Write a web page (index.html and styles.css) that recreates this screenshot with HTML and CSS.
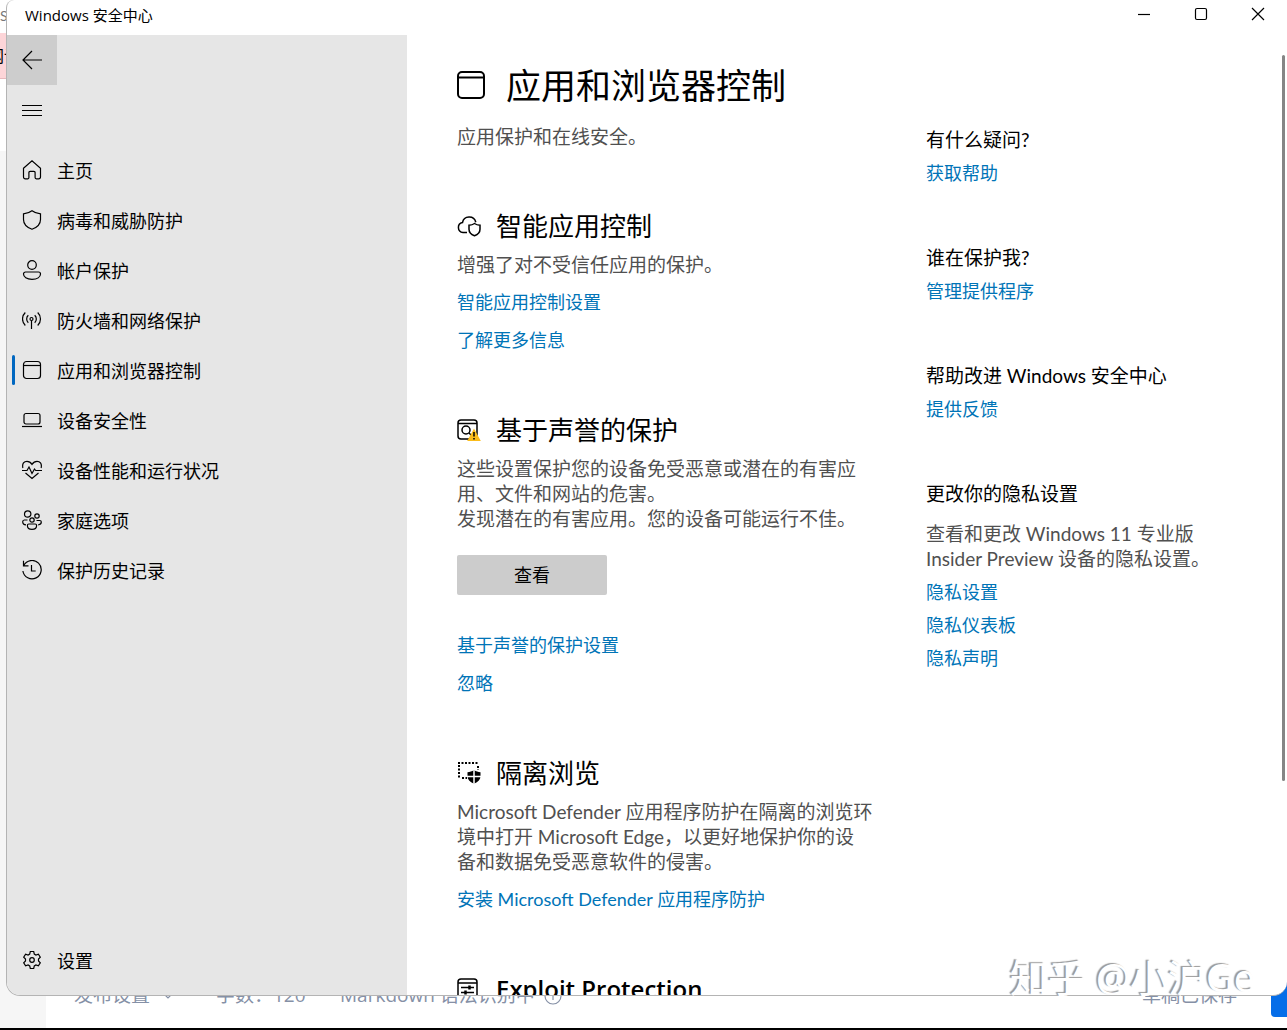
FILE: index.html
```html
<!DOCTYPE html>
<html lang="zh-CN">
<head>
<meta charset="utf-8">
<title>Windows 安全中心</title>
<link rel="stylesheet" href="styles.css">
</head>
<body>
<div class="desktop">

  <div class="editor">
    <div class="editor-edge" aria-hidden="true">
      <div class="edge-top">S</div>
      <div class="edge-alert">网讠</div>
      <div class="edge-card"></div>
    </div>
    <footer class="editor-footer">
      <span class="publish">发布设置 <svg width="10" height="10" viewBox="0 0 10 10"><path d="M1 3l4 4 4-4"/></svg></span>
      <span class="count">字数：120</span>
      <span class="syntax">Markdown 语法识别中 <svg width="18" height="18" viewBox="0 0 18 18"><circle cx="9" cy="9" r="8"/><path d="M9 8v5M9 5v1"/></svg></span>
      <span class="saved">草稿已保存</span>
      <button class="publish-btn" type="button" aria-label="发布"></button>
    </footer>
  </div>

  <div class="window">
    <header class="titlebar">
      <span class="titlebar-text">Windows 安全中心</span>
      <div class="caption">
        <button type="button" aria-label="最小化"><svg width="14" height="14" viewBox="0 0 14 14"><path d="M1 7.5h12"/></svg></button>
        <button type="button" aria-label="最大化"><svg width="14" height="14" viewBox="0 0 14 14"><rect x="1.5" y="1.5" width="11" height="11" rx="1.5"/></svg></button>
        <button type="button" aria-label="关闭"><svg width="14" height="14" viewBox="0 0 14 14"><path d="M1 1l12 12M13 1L1 13"/></svg></button>
      </div>
    </header>

    <div class="window-body">
      <aside class="sidebar">
        <button class="square back" type="button" aria-label="返回"><svg width="20" height="20" viewBox="0 0 20 20"><path d="M20 10H1M10 1L1 10l9 9"/></svg></button>
        <button class="square" type="button" aria-label="菜单"><svg width="20" height="20" viewBox="0 0 20 20"><path d="M0 5.500h20M0 10.500h20M0 15.500h20"/></svg></button>
        <nav class="nav">
          <a href="#home"><svg width="20" height="20" viewBox="0 0 20 20"><path d="M1.500 8.200L10 .8l8.500 7.400V17a1.800 1.800 0 0 1-1.800 1.800h-2.400a1.200 1.200 0 0 1-1.200-1.200v-5a1.200 1.200 0 0 0-1.200-1.200H8.100a1.200 1.200 0 0 0-1.200 1.200v5a1.200 1.200 0 0 1-1.200 1.200H3.300A1.800 1.800 0 0 1 1.500 17z"/></svg><span>主页</span></a>
          <a href="#virus"><svg width="20" height="20" viewBox="0 0 20 20"><path d="M10 .8c2.600 2 5.300 2.800 8.500 3v5.700c0 4.500-2.800 7.700-8.500 9.800-5.700-2.100-8.500-5.300-8.500-9.800V3.800c3.200-.2 5.900-1 8.500-3z"/></svg><span>病毒和威胁防护</span></a>
          <a href="#account"><svg width="20" height="20" viewBox="0 0 20 20"><circle cx="10" cy="5" r="4.300"/><path d="M3.500 12h13a2 2 0 0 1 2 2c0 3-3.200 5.300-8.500 5.300S1.500 17 1.500 14a2 2 0 0 1 2-2z"/></svg><span>帐户保护</span></a>
          <a href="#firewall"><svg width="20" height="20" viewBox="0 0 20 20"><circle cx="9.500" cy="9" r="1.500"/><path d="M9.500 10.500V19M6.300 5.300a5 5 0 0 0 0 7.400M12.700 5.300a5 5 0 0 1 0 7.400M3.300 2.500a9 9 0 0 0 0 13M15.700 2.500a9 9 0 0 1 0 13"/></svg><span>防火墙和网络保护</span></a>
          <a href="#apps" class="current" aria-current="page"><svg width="20" height="20" viewBox="0 0 20 20"><rect x="1.500" y="1.500" width="17" height="17" rx="3"/><path d="M1.500 5.500h17"/></svg><span>应用和浏览器控制</span></a>
          <a href="#device"><svg width="20" height="20" viewBox="0 0 20 20"><rect x="2" y="3.500" width="16" height="10.500" rx="2"/><path d="M0 16.500h20"/></svg><span>设备安全性</span></a>
          <a href="#health"><svg width="20" height="20" viewBox="0 0 20 20"><path d="M.9 8C-.2 3.500 2.200 1.300 5 1.300c2.200 0 3.800 1.200 5 3 1.200-1.800 2.800-3 5-3 2.800 0 5.200 2.200 4.100 6.700M0 10.500h5L7 7l3 6.500 2.500-4.500 1.200 1.500H20M3.500 13L10 18.500l6.500-5.500"/></svg><span>设备性能和运行状况</span></a>
          <a href="#family"><svg width="20" height="20" viewBox="0 0 20 20"><circle cx="5.700" cy="4" r="3.200"/><circle cx="15" cy="6" r="2.200"/><circle cx="10" cy="10" r="2.200"/><path d="M5.500 10H2.300A1.700 1.700 0 0 0 .7 11.700c0 1.800 1.200 3 3.300 3.200M14.500 10.500h3.200a1.600 1.600 0 0 1 1.600 1.600c0 1.600-1 2.700-3.100 2.800M6.800 14h6.400a1.400 1.400 0 0 1 1.400 1.400c0 2.300-1.700 3.900-4.600 3.900s-4.600-1.600-4.600-3.900A1.400 1.400 0 0 1 6.800 14z"/></svg><span>家庭选项</span></a>
          <a href="#history"><svg width="20" height="20" viewBox="0 0 20 20"><path d="M1.500 .8v5h5M1.800 5.500A9.200 9.200 0 1 1 .9 11M9.500 5v6h4.200"/></svg><span>保护历史记录</span></a>
        </nav>
        <nav class="nav nav-bottom">
          <a href="#settings"><svg width="20" height="20" viewBox="0 0 20 20"><circle cx="10" cy="10" r="2.300"/><path d="M8.300 1.500h3.400l.6 2.600 1.600.9 2.500-.8 1.900 3-1.800 1.900v1.800l1.800 1.900-1.900 3-2.500-.8-1.600.9-.6 2.600H8.300l-.6-2.600-1.600-.9-2.500.8-1.900-3 1.800-1.900V9.100L1.700 7.200l1.900-3 2.500.8 1.600-.9z"/></svg><span>设置</span></a>
        </nav>
      </aside>

      <main class="content">
        <h1><svg width="28" height="28" viewBox="0 0 28 28"><rect x="1" y="1" width="26" height="26" rx="4"/><path d="M1 6.500h26"/></svg>应用和浏览器控制</h1>
        <div class="columns">
          <div class="primary">
            <p class="intro">应用保护和在线安全。</p>

            <section>
              <h2><svg width="24" height="24" viewBox="0 0 24 24"><path d="M10 18.500H6A5 5 0 0 1 5.500 8.600 6.800 6.800 0 0 1 18.800 8.200"/><path d="M17.500 9.500c1.700 1.200 3.500 1.700 5.500 1.800v3.900c0 3-1.800 5.200-5.500 6.600-3.700-1.400-5.500-3.600-5.500-6.600v-3.900c2-.1 3.800-.6 5.500-1.800z"/></svg>智能应用控制</h2>
              <p>增强了对不受信任应用的保护。</p>
              <a href="#smart">智能应用控制设置</a>
              <a href="#more">了解更多信息</a>
            </section>

            <section>
              <h2><svg width="24" height="24" viewBox="0 0 24 24"><rect x="1" y="2" width="19" height="19" rx="3"/><path d="M1 5.500h19"/><circle cx="9" cy="12" r="4"/><path d="M12 15l4 4"/><path class="warn" d="M17 10.500L23.800 23H10.200z"/><path d="M17 14v4.500M17 20v1.500"/></svg>基于声誉的保护</h2>
              <p>这些设置保护您的设备免受恶意或潜在的有害应<br>用、文件和网站的危害。<br>发现潜在的有害应用。您的设备可能运行不佳。</p>
              <button class="action" type="button">查看</button>
              <a href="#reputation">基于声誉的保护设置</a>
              <a href="#ignore">忽略</a>
            </section>

            <section>
              <h2><svg width="24" height="24" viewBox="0 0 24 24"><path class="dotted" d="M1 2h20.500M2 4v14M5 17h5M21 5v4"/><path class="solid" d="M17 9c2 1.400 4.200 2 6.500 2.200v3.800c0 3.500-2.200 6-6.500 7.800-4.300-1.800-6.500-4.300-6.500-7.800v-3.800C12.800 11 15 10.400 17 9z"/><path class="cross" d="M17 9v14M10 15.500h14"/></svg>隔离浏览</h2>
              <p>Microsoft Defender 应用程序防护在隔离的浏览环<br>境中打开 Microsoft Edge，以更好地保护你的设<br>备和数据免受恶意软件的侵害。</p>
              <a href="#install">安装 Microsoft Defender 应用程序防护</a>
            </section>

            <section>
              <h2 class="latin"><svg width="24" height="24" viewBox="0 0 24 24"><rect x="1" y="2" width="19" height="20" rx="3"/><path d="M1 6h19M4 10.500h13M4 15.500h13"/><path class="knobs" d="M12.500 8.500v4M8.500 13.500v4"/></svg>Exploit Protection</h2>
            </section>
          </div>

          <aside class="secondary">
            <section>
              <h3>有什么疑问?</h3>
              <a href="#help">获取帮助</a>
            </section>
            <section>
              <h3>谁在保护我?</h3>
              <a href="#providers">管理提供程序</a>
            </section>
            <section>
              <h3>帮助改进 Windows 安全中心</h3>
              <a href="#feedback">提供反馈</a>
            </section>
            <section>
              <h3>更改你的隐私设置</h3>
              <p>查看和更改 Windows 11 专业版<br>Insider Preview 设备的隐私设置。</p>
              <a href="#privacy">隐私设置</a>
              <a href="#dashboard">隐私仪表板</a>
              <a href="#statement">隐私声明</a>
            </section>
          </aside>
        </div>
      </main>
      <div class="scrollbar" aria-hidden="true"></div>
    </div>
  </div>

  <div class="watermark">知乎 @小沪Ge</div>
</div>
</body>
</html>
```
FILE: styles.css
```css
* {
  box-sizing: border-box;
}

body {
  margin: 0;
  font-family: Lato, "Noto Sans CJK SC", sans-serif;
  font-size: 18px;
  line-height: 25px;
  color: #000;
}

h1, h2, h3, p {
  margin: 0;
  font-weight: 400;
}

button {
  padding: 0;
  border: 0;
  background: none;
  font: inherit;
  color: inherit;
}

a {
  color: #0074b7;
  text-decoration: none;
}

svg {
  flex: none;
  fill: none;
  stroke: currentColor;
  stroke-width: 1.2;
}

.desktop {
  position: relative;
  height: 100vh;
  overflow: hidden;
  background: #fff;
}

/* Editor page behind the window */
.editor {
  display: flex;
  flex-direction: column;
  justify-content: space-between;
  height: 100%;
  border-bottom: 2px solid #000;
  background: linear-gradient(to right, #f6f6f6 46px, #fff 46px);
}

.editor-edge {
  width: 46px;
  font-size: 16px;
  white-space: nowrap;
}

.edge-top {
  height: 33px;
  padding-top: 3px;
  background: #fff;
  color: #777;
  font-size: 14px;
}

.edge-alert {
  height: 46px;
  padding-top: 10px;
  border-bottom: 1px solid #e8b8bc;
  background: #fdd5d8;
  text-indent: -12px;
}

.edge-card {
  height: 72px;
  background: #fff;
}

.editor-footer {
  display: flex;
  align-items: center;
  height: 66px;
  padding-left: 74px;
  color: #8590a6;
  font-family: "Open Sans", "Noto Sans CJK SC", sans-serif;
  font-size: 19px;
}

.editor-footer svg {
  vertical-align: middle;
}

.publish {
  width: 142px;
}

.publish svg {
  margin-left: 8px;
}

.count {
  width: 124px;
}

.syntax svg {
  margin-left: 4px;
}

.saved {
  margin-left: auto;
}

.publish-btn {
  width: 16px;
  height: 44px;
  margin-left: 34px;
  border-radius: 4px 0 0 4px;
  background: #056de8;
}

/* Window frame */
.window {
  position: absolute;
  inset: 0 0 34px 6px;
  display: flex;
  flex-direction: column;
  overflow: hidden;
  border: 1px solid #b4b4b4;
  border-width: 0 0 1px 1px;
  border-radius: 8px 8px 14px 14px;
  background: #fff;
}

.titlebar {
  display: flex;
  flex: none;
  justify-content: space-between;
  height: 35px;
  padding: 0 1px 0 18px;
}

.titlebar-text {
  font-family: "Open Sans", "Noto Sans CJK SC", sans-serif;
  font-size: 15px;
  line-height: 30px;
}

.caption {
  display: flex;
}

.caption button {
  display: grid;
  place-items: center;
  width: 57px;
  height: 28px;
}

.window-body {
  display: flex;
  flex: 1;
  min-height: 0;
}

/* Sidebar */
.sidebar {
  display: flex;
  flex: none;
  flex-direction: column;
  width: 400px;
  padding-bottom: 10px;
  background: #e6e6e6;
}

.square {
  display: grid;
  place-items: center;
  width: 50px;
  height: 50px;
}

.back {
  background: #cdcdcd;
}

.nav {
  padding-top: 10px;
}

.nav a {
  display: flex;
  align-items: center;
  gap: 15px;
  height: 50px;
  padding-left: 15px;
  color: #000;
}

.nav span {
  padding-top: 2px;
}

.nav a.current {
  gap: 0;
  padding-left: 5px;
}

.nav a.current::before {
  content: "";
  width: 3px;
  height: 30px;
  margin-right: 7px;
  border-radius: 2px;
  background: #0067c0;
}

.nav a.current span {
  padding-left: 15px;
}

.nav-bottom {
  margin-top: auto;
}

/* Content */
.content {
  flex: 1;
  min-width: 0;
  padding: 26px 0 0 50px;
  overflow: hidden;
}

h1 {
  display: flex;
  align-items: center;
  gap: 21px;
  height: 48px;
  font-size: 35px;
  line-height: 48px;
}

h1 svg {
  stroke-width: 2;
}

.columns {
  display: grid;
  grid-template-columns: 420px 1fr;
  gap: 49px;
  padding-top: 15px;
}

.primary {
  display: flex;
  flex-direction: column;
  gap: 60px;
}

.primary section,
.secondary section {
  display: flex;
  flex-direction: column;
  align-items: flex-start;
}

h2 {
  display: flex;
  align-items: center;
  gap: 15px;
  margin-bottom: 9px;
  font-size: 26px;
  line-height: 34px;
}

h2 svg {
  stroke-width: 1.5;
}

.latin {
  font-family: "Open Sans", sans-serif;
  font-size: 24px;
  font-weight: 600;
}

.knobs {
  stroke-width: 2.5;
}

.warn {
  fill: #fbbc1a;
  stroke: none;
}

.dotted {
  stroke-width: 2;
  stroke-dasharray: 2 1.5;
}

.solid {
  fill: #000;
  stroke: none;
}

.cross {
  stroke: #fff;
}

p {
  font-size: 19px;
  color: #505050;
  white-space: nowrap;
}

.primary a {
  margin-top: 13px;
}

.action {
  width: 150px;
  height: 40px;
  margin: 24px 0 25px;
  border-radius: 2px;
  background: #ccc;
}

.secondary {
  display: flex;
  flex-direction: column;
  gap: 59px;
  padding-top: 3px;
}

h3 {
  font-size: 19px;
  line-height: 25px;
}

.secondary a {
  margin-top: 9px;
}

.secondary a + a {
  margin-top: 8px;
}

.secondary p {
  margin-top: 15px;
}

.scrollbar {
  width: 3px;
  height: 726px;
  margin: 20px 2px 0 0;
  border-radius: 2px;
  background: #858585;
}

.watermark {
  position: absolute;
  right: 32px;
  bottom: 26px;
  color: #fff;
  font-family: "Open Sans", "Noto Sans CJK SC", sans-serif;
  font-size: 38px;
  line-height: 54px;
  text-shadow: -2px -1px 1px #999;
}
```
